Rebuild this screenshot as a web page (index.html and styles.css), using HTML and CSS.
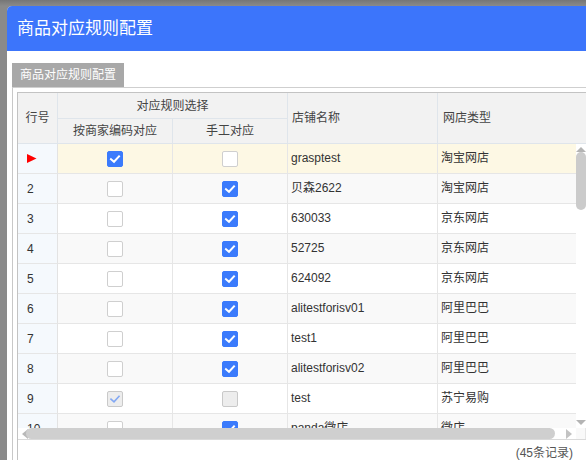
FILE: index.html
```html
<!DOCTYPE html>
<html lang="zh-CN">
<head>
<meta charset="utf-8">
<title>商品对应规则配置</title>
<link rel="stylesheet" href="styles.css">
</head>
<body>
<div class="dialog">
  <div class="dialog-title">商品对应规则配置</div>
  <div class="dialog-body">
    <div class="tab">商品对应规则配置</div>
    <div class="panel">
      <div class="grid">
        <div class="grid-head">
          <div class="hc h-rn">行号</div>
          <div class="hc h-group">对应规则选择</div>
          <div class="hc h-shop">店铺名称</div>
          <div class="hc h-type">网店类型</div>
          <div class="hc h-sub1">按商家编码对应</div>
          <div class="hc h-sub2">手工对应</div>
        </div>
        <div class="grid-body">
          <div class="rows">
            <div class="row current">
              <div class="c rn"><svg class="flag" width="10" height="9" viewBox="0 0 10 9"><polygon points="0,0 9.5,4.5 0,9" fill="#f00"/></svg></div>
              <div class="c cb"><span class="chk on"><svg viewBox="0 0 16 16"><path d="M4 8.2 L7 10.8 L12 5.4" /></svg></span></div>
              <div class="c cb"><span class="chk"></span></div>
              <div class="c txt">grasptest</div>
              <div class="c txt">淘宝网店</div>
            </div>
            <div class="row alt">
              <div class="c rn">2</div>
              <div class="c cb"><span class="chk"></span></div>
              <div class="c cb"><span class="chk on"><svg viewBox="0 0 16 16"><path d="M4 8.2 L7 10.8 L12 5.4" /></svg></span></div>
              <div class="c txt">贝森2622</div>
              <div class="c txt">淘宝网店</div>
            </div>
            <div class="row">
              <div class="c rn">3</div>
              <div class="c cb"><span class="chk"></span></div>
              <div class="c cb"><span class="chk on"><svg viewBox="0 0 16 16"><path d="M4 8.2 L7 10.8 L12 5.4" /></svg></span></div>
              <div class="c txt">630033</div>
              <div class="c txt">京东网店</div>
            </div>
            <div class="row alt">
              <div class="c rn">4</div>
              <div class="c cb"><span class="chk"></span></div>
              <div class="c cb"><span class="chk on"><svg viewBox="0 0 16 16"><path d="M4 8.2 L7 10.8 L12 5.4" /></svg></span></div>
              <div class="c txt">52725</div>
              <div class="c txt">京东网店</div>
            </div>
            <div class="row">
              <div class="c rn">5</div>
              <div class="c cb"><span class="chk"></span></div>
              <div class="c cb"><span class="chk on"><svg viewBox="0 0 16 16"><path d="M4 8.2 L7 10.8 L12 5.4" /></svg></span></div>
              <div class="c txt">624092</div>
              <div class="c txt">京东网店</div>
            </div>
            <div class="row alt">
              <div class="c rn">6</div>
              <div class="c cb"><span class="chk"></span></div>
              <div class="c cb"><span class="chk on"><svg viewBox="0 0 16 16"><path d="M4 8.2 L7 10.8 L12 5.4" /></svg></span></div>
              <div class="c txt">alitestforisv01</div>
              <div class="c txt">阿里巴巴</div>
            </div>
            <div class="row">
              <div class="c rn">7</div>
              <div class="c cb"><span class="chk"></span></div>
              <div class="c cb"><span class="chk on"><svg viewBox="0 0 16 16"><path d="M4 8.2 L7 10.8 L12 5.4" /></svg></span></div>
              <div class="c txt">test1</div>
              <div class="c txt">阿里巴巴</div>
            </div>
            <div class="row alt">
              <div class="c rn">8</div>
              <div class="c cb"><span class="chk"></span></div>
              <div class="c cb"><span class="chk on"><svg viewBox="0 0 16 16"><path d="M4 8.2 L7 10.8 L12 5.4" /></svg></span></div>
              <div class="c txt">alitestforisv02</div>
              <div class="c txt">阿里巴巴</div>
            </div>
            <div class="row">
              <div class="c rn">9</div>
              <div class="c cb"><span class="chk dis dis-on"><svg viewBox="0 0 16 16"><path d="M4 8.2 L7 10.8 L12 5.4" /></svg></span></div>
              <div class="c cb"><span class="chk dis"></span></div>
              <div class="c txt">test</div>
              <div class="c txt">苏宁易购</div>
            </div>
            <div class="row alt">
              <div class="c rn">10</div>
              <div class="c cb"><span class="chk"></span></div>
              <div class="c cb"><span class="chk on"><svg viewBox="0 0 16 16"><path d="M4 8.2 L7 10.8 L12 5.4" /></svg></span></div>
              <div class="c txt">panda微店</div>
              <div class="c txt">微店</div>
            </div>
          </div>
          <div class="vscroll">
            <span class="arrow-up"></span>
            <span class="vthumb"></span>
            <span class="arrow-down"></span>
          </div>
          <div class="hscroll">
            <span class="arrow-left"></span>
            <span class="hthumb"></span>
            <span class="arrow-right"></span>
          </div>
        </div>
        <div class="grid-foot">(45条记录)</div>
      </div>
    </div>
  </div>
</div>
</body>
</html>
```

FILE: styles.css
```css
html, body {
  margin: 0;
  padding: 0;
}
body {
  width: 586px;
  height: 460px;
  overflow: hidden;
  background: linear-gradient(#767676 0, #8a8a8a 6px, #8a8a8a 100%);
  font-family: "Liberation Sans", "Noto Sans CJK SC", sans-serif;
  font-size: 12px;
  color: #333;
}
.dialog {
  margin: 6px 0 0 7px;
  width: 579px;
  height: 454px;
  background: #fff;
  border-radius: 5px 0 0 0;
  overflow: hidden;
}
.dialog-title {
  height: 45px;
  line-height: 45px;
  background: #3c75fb;
  color: #fff;
  font-size: 17px;
  padding-left: 10px;
}
.dialog-body {
  padding: 12px 0 0 5px;
}
.tab {
  display: inline-block;
  height: 24px;
  line-height: 24px;
  padding: 0 8px;
  background: #a8a8a8;
  color: #fff;
  font-size: 12px;
  vertical-align: top;
}
.panel {
  border-top: 1px solid #cfcfcf;
  border-left: 1px solid #c8c8c8;
  padding: 4px 0 0 4px;
}
.grid {
  width: 568px;
  border: 1px solid #c3c3c3;
  border-right: none;
  border-bottom: none;
}
.grid-head {
  display: grid;
  grid-template-columns: 40px 115px 115px 150px 148px;
  grid-template-rows: 26px 25px;
  background: #f2f2f2;
}
.hc {
  box-sizing: border-box;
  border-right: 1px solid #dfe5eb;
  border-bottom: 1px solid #dfe5eb;
  display: flex;
  align-items: center;
  color: #444;
  font-size: 12px;
  line-height: 14px;
}
.h-rn { grid-column: 1; grid-row: 1 / 3; justify-content: center; }
.h-group { grid-column: 2 / 4; grid-row: 1; justify-content: center; }
.h-shop { grid-column: 4; grid-row: 1 / 3; padding-left: 4px; }
.h-type { grid-column: 5; grid-row: 1 / 3; padding-left: 5px; border-right: none; }
.h-sub1 { grid-column: 2; grid-row: 2; justify-content: center; }
.h-sub2 { grid-column: 3; grid-row: 2; justify-content: center; }

.grid-body {
  position: relative;
  height: 295px;
  overflow: hidden;
}
.row {
  display: grid;
  grid-template-columns: 40px 115px 115px 150px 148px;
  height: 30px;
  background: #fff;
}
.row.alt { background: #f9f9f9; }
.row.current { background: #fdf8e4; }
.c {
  box-sizing: border-box;
  border-right: 1px solid #e6e6e6;
  border-bottom: 1px solid #e6e6e6;
  display: flex;
  align-items: center;
  line-height: 14px;
  color: #333;
  white-space: nowrap;
  overflow: hidden;
}
.c.rn {
  background: #f5f9fd;
  padding-left: 9px;
  border-right-color: #e3e3e3;
}
.c.cb { justify-content: center; }
.c.txt { padding-left: 3px; padding-bottom: 1px; }
.flag { display: block; }

.chk {
  box-sizing: border-box;
  width: 16px;
  height: 16px;
  border: 1px solid #cfcfcf;
  border-radius: 2px;
  background: #fff;
  display: block;
}
.chk svg {
  display: block;
  width: 16px;
  height: 16px;
  margin: -1px 0 0 -1px;
}
.chk path {
  fill: none;
  stroke: #fff;
  stroke-width: 2;
  stroke-linecap: square;
}
.chk.on {
  background: #3b7bfc;
  border-color: #3b7bfc;
}
.chk.dis {
  background: #ededed;
  border-color: #c9c9c9;
}
.chk.dis-on path {
  stroke: #83a8f3;
  stroke-width: 1.6;
}

.vscroll {
  position: absolute;
  top: 0;
  left: 558px;
  width: 10px;
  height: 284px;
  background: #fff;
}
.arrow-up {
  position: absolute;
  top: 3px;
  left: 0;
  width: 0;
  height: 0;
  border-left: 5px solid transparent;
  border-right: 5px solid transparent;
  border-bottom: 5px solid #b4b4b4;
}
.vthumb {
  position: absolute;
  top: 8px;
  left: 0;
  width: 10px;
  height: 58px;
  border-radius: 5px;
  background: #cbcbcb;
}
.arrow-down {
  position: absolute;
  top: 276px;
  left: 0;
  width: 0;
  height: 0;
  border-left: 5px solid transparent;
  border-right: 5px solid transparent;
  border-top: 5px solid #b4b4b4;
}
.hscroll {
  position: absolute;
  left: 0;
  top: 284px;
  width: 558px;
  height: 11px;
  background: #fff;
}
.arrow-left {
  position: absolute;
  left: 4px;
  top: 1px;
  width: 0;
  height: 0;
  border-top: 5px solid transparent;
  border-bottom: 5px solid transparent;
  border-right: 6px solid #b9b9b9;
}
.hthumb {
  position: absolute;
  left: 8px;
  top: 0;
  width: 529px;
  height: 11px;
  border-radius: 6px;
  background: #cfcfcf;
}
.arrow-right {
  position: absolute;
  left: 548px;
  top: 1px;
  width: 0;
  height: 0;
  border-top: 5px solid transparent;
  border-bottom: 5px solid transparent;
  border-left: 6px solid #c3c3c3;
}
.grid-foot {
  border-top: 1px solid #dadada;
  height: 20px;
  line-height: 26px;
  text-align: right;
  padding-right: 13px;
  color: #555;
  font-size: 12px;
  overflow: hidden;
}
```
